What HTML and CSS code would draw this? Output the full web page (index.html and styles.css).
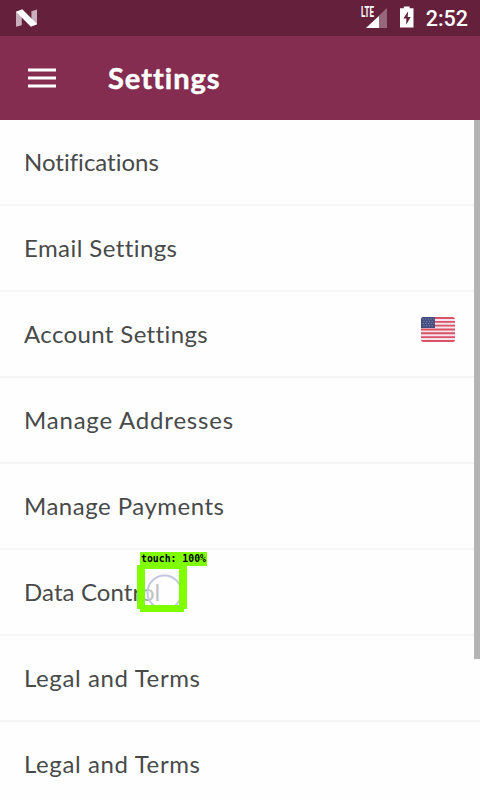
FILE: index.html
```html
<!DOCTYPE html>
<html lang="en">
<head>
<meta charset="utf-8">
<title>Settings</title>
<link rel="stylesheet" href="styles.css">
</head>
<body>
<div class="screen">
  <div class="status">
    <svg class="logo" width="22" height="18" viewBox="0 0 22 18"><path fill="#c9aebb" d="M0 2.500 6 1v15.500L0 18zM16 2l6-2v15.500l-6 2z"/><path fill="#fff" d="M0 2.500 6.500 0 22 15.500 15.500 18z"/></svg>
    <svg class="signal" width="26" height="26" viewBox="0 -4 26 26"><path fill="#95687c" d="M26 1v20H5z"/><path fill="#65213b" d="M0 0h14v11H0z"/><path fill="#fff" d="M18 9v12H5z"/><text class="lte" x="0" y="10" textLength="13" lengthAdjust="spacingAndGlyphs">LTE</text></svg>
    <svg class="battery" width="14" height="22" viewBox="0 0 14 22"><path fill="#fff" d="M4 0h6v2h4v20H0V2h4z"/><path fill="#65213b" d="M8.500 5 3.500 12.500h3V19l4.500-8H8z"/></svg>
    <span class="clock">2:52</span>
  </div>
  <header class="bar">
    <svg width="28" height="20" viewBox="0 0 28 20"><path fill="#c798ac" d="M0 0h28v4H0zM0 8h28v4H0zM0 16h28v4H0z"/><path fill="#fff" d="M0 1h28v2H0zM0 9h28v2H0zM0 17h28v2H0z"/></svg>
    <h1>Settings</h1>
  </header>
  <main class="list">
    <div class="row"><span class="t1">Notifications</span></div>
    <div class="row"><span class="t2">Email Settings</span></div>
    <div class="row"><span class="t3">Account Settings</span>
      <svg class="flag" width="34" height="25" viewBox="0 0 34 25"><defs><clipPath id="r"><rect width="34" height="25" rx="2.500"/></clipPath></defs><g clip-path="url(#r)"><rect width="34" height="25" fill="#f7e6e9"/><path stroke="#d95267" stroke-width="1.900" d="M0 1h34M0 4.830h34M0 8.660h34M0 12.490h34M0 16.320h34M0 20.150h34M0 24h34"/><rect width="14" height="11" fill="#414a7c"/><path stroke="#a3a8c5" stroke-width="1" stroke-dasharray="1 1.700" d="M1.500 2h12M2.500 4.300h11M1.500 6.600h12M2.500 8.900h11"/></g></svg>
    </div>
    <div class="row"><span class="t4">Manage Addresses</span></div>
    <div class="row"><span class="t5">Manage Payments</span></div>
    <div class="row"><span class="t6">Data Contr<span class="dim">ol</span></span></div>
    <div class="row"><span class="t7">Legal and Terms</span></div>
    <div class="row"><span class="t7">Legal and Terms</span></div>
  </main>
  <div class="scroll"></div>
  <svg class="touch" width="72" height="62" viewBox="0 0 72 62"><circle cx="27.500" cy="40.500" r="17" fill="#fff" fill-opacity=".3" stroke="#c5c8e2" stroke-width="2"/><path fill="#80ff00" fill-rule="evenodd" d="M3 0h67v14H50v43h-3v3H3v-3H0V13h3zM8 17v36h34V17z"/><text class="label" x="4" y="10" textLength="65" lengthAdjust="spacingAndGlyphs">touch: 100%</text></svg>
</div>
</body>
</html>
```
FILE: styles.css
```css
body { margin: 0; }
.screen { position: relative; width: 480px; height: 800px; overflow: hidden; background: #fefefe; font-family: Lato, sans-serif; font-variant-ligatures: none; }
.status { display: flex; height: 36px; background: #65213b; box-sizing: border-box; padding: 0 12px 0 16px; }
.logo { margin-top: 9px; }
.signal { margin: 3px 0 0 324px; overflow: visible; }
.lte { font: bold 14px Roboto, sans-serif; fill: #fff; }
.battery { margin: 6px 0 0 13px; }
.clock { margin-left: 12px; font: 500 21.5px/38px Roboto, sans-serif; color: #fff; white-space: nowrap; }
.bar { display: flex; align-items: center; height: 84px; background: #852d50; padding-left: 28px; }
.bar svg { margin-top: -1px; }
.bar h1 { margin: -1px 0 0 52px; font-size: 29px; line-height: 84px; font-weight: 700; letter-spacing: 1px; color: #fff; -webkit-text-stroke: .5px #fff; }
.row { display: flex; align-items: center; justify-content: space-between; box-sizing: border-box; height: 86px; padding: 0 25px 0 24px; border-bottom: 2px solid #f5f5f6; font-size: 24px; color: #484a4a; white-space: nowrap; }
.row > span { margin-top: -2px; }
.t1 { letter-spacing: 0; }
.t2 { letter-spacing: .42px; }
.t3 { letter-spacing: .37px; }
.t4 { letter-spacing: .8px; }
.t5 { letter-spacing: .5px; }
.t6 { letter-spacing: .1px; }
.t7 { letter-spacing: .62px; }
.flag { margin-top: -9px; }
.dim { color: #a6a6ab; }
.scroll { position: absolute; right: 0; top: 120px; width: 6px; height: 539px; background: #b4b4b4; }
.touch { position: absolute; left: 137px; top: 552px; }
.label { font: bold 10px "DejaVu Sans Mono", monospace; fill: #000; }
```
